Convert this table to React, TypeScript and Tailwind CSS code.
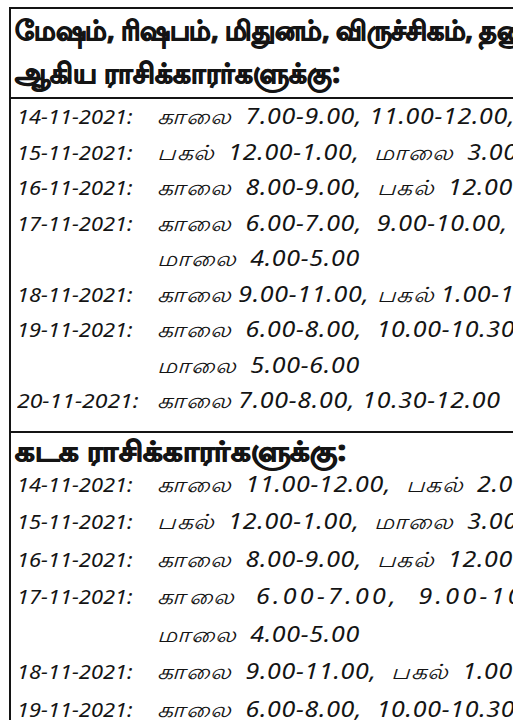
type Row = { date?: string; text: string; extra?: string; dateSize?: string };

const upperRows: Row[] = [
  { date: '14-11-2021:', text: 'காலை  7.00-9.00, 11.00-12.00,  பகல் 1.00-2.00' },
  { date: '15-11-2021:', text: 'பகல்  12.00-1.00,  மாலை  3.00-4.00' },
  { date: '16-11-2021:', text: 'காலை  8.00-9.00,  பகல்  12.00-1.00' },
  { date: '17-11-2021:', text: 'காலை  6.00-7.00,  9.00-10.00,  பகல்' },
  { text: 'மாலை  4.00-5.00' },
  { date: '18-11-2021:', text: 'காலை 9.00-11.00, பகல் 1.00-1.30' },
  { date: '19-11-2021:', text: 'காலை  6.00-8.00,  10.00-10.30,' },
  { text: 'மாலை  5.00-6.00' },
  { date: '20-11-2021:', text: 'காலை 7.00-8.00, 10.30-12.00', dateSize: 'text-[20px]' },
];

const lowerRows: Row[] = [
  { date: '14-11-2021:', text: 'காலை  11.00-12.00,  பகல்  2.00-3.00' },
  { date: '15-11-2021:', text: 'பகல்  12.00-1.00,  மாலை  3.00-4.00' },
  { date: '16-11-2021:', text: 'காலை  8.00-9.00,  பகல்  12.00-1.00' },
  { date: '17-11-2021:', text: 'காலை  6.00-7.00,  9.00-10.00', extra: 'tracking-[2.8px]' },
  { text: 'மாலை  4.00-5.00' },
  { date: '18-11-2021:', text: 'காலை  9.00-11.00,  பகல்  1.00-2.00' },
  { date: '19-11-2021:', text: 'காலை  6.00-8.00,  10.00-10.30' },
];

function TimeRow({ row, h }: { row: Row; h: string }) {
  return (
    <div className={`flex items-baseline whitespace-pre leading-[35px] ${h}`}>
      <span className="w-[140px] shrink-0">
        <span className={`inline-block origin-left scale-x-[1.15] ${row.dateSize ?? 'text-[19px]'}`}>
          {row.date ?? ''}
        </span>
      </span>
      <span className={`inline-block origin-left scale-x-[1.19] text-[21px] ${row.extra ?? 'tracking-[0.6px]'}`}>
        {row.text}
      </span>
    </div>
  );
}

export default function App() {
  return (
    <div
      className="w-[513px] h-[720px] overflow-hidden bg-white text-[#141414]"
      style={{ fontFamily: '"Noto Sans", "Open Sans", sans-serif' }}
    >
      <div className="mt-[7px] ml-[9px] w-[760px] border-t-2 border-l-2 border-[#141414]">
        {/* header 1 */}
        <div className="pl-[4px] pb-[4px] font-bold leading-[42px] whitespace-nowrap [-webkit-text-stroke:1.1px_#141414]">
          <div className="text-[27px] tracking-[-0.3px]">மேஷம், ரிஷபம், மிதுனம், விருச்சிகம், தனுசு</div>
          <div className="text-[28px]">ஆகிய ராசிக்காரர்களுக்கு:</div>
        </div>
        <div className="border-t-2 border-[#141414]" />
        <div className="pl-[6px] pb-[12px] italic">
          {upperRows.map((r, i) => (
            <TimeRow key={i} row={r} h="h-[35.5px]" />
          ))}
        </div>
        <div className="border-t-2 border-[#141414]" />

        {/* header 2 */}
        <div className="pl-[4px] h-[34px] leading-[34px] whitespace-nowrap font-bold [-webkit-text-stroke:1.1px_#141414]">
          <span className="inline-block origin-left scale-x-[1.1] text-[28px]">கடக ராசிக்காரர்களுக்கு:</span>
        </div>
        <div className="pl-[6px] italic">
          {lowerRows.map((r, i) => (
            <TimeRow key={i} row={r} h="h-[37.5px]" />
          ))}
        </div>
      </div>
    </div>
  );
}
